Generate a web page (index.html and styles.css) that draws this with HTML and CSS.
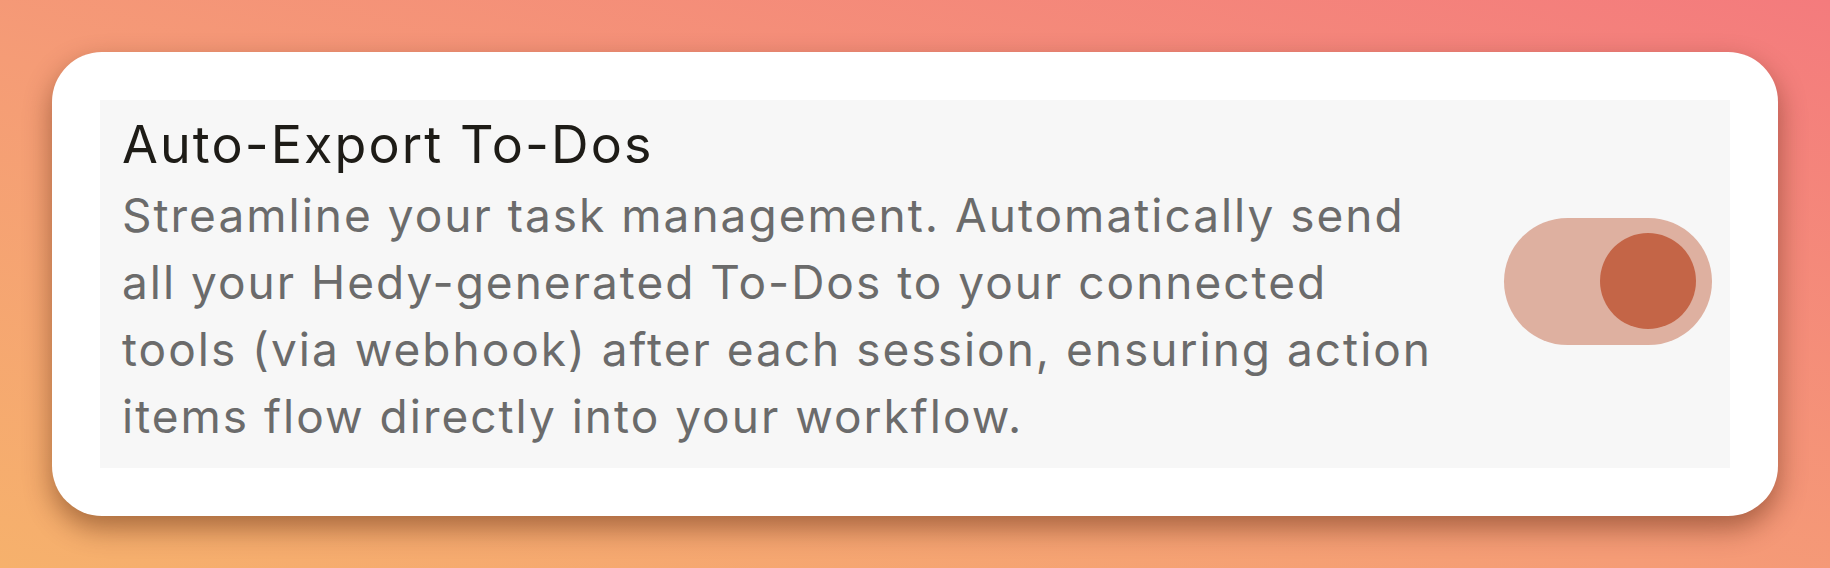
FILE: index.html
```html
<!DOCTYPE html>
<html lang="en">
<head>
    <meta charset="UTF-8">
    <meta name="viewport" content="width=device-width, initial-scale=1.0">
    <title>Auto-Export To-Dos</title>
    <link rel="stylesheet" href="styles.css">
</head>
<body>
    <main class="stage">
        <section class="card">
            <div class="setting">
                <div class="setting-text">
                    <h2 class="setting-title">Auto-Export To-Dos</h2>
                    <p class="setting-desc">Streamline your task management. Automatically send all your Hedy-generated To-Dos to your connected tools (via webhook) after each session, ensuring action items flow directly into your workflow.</p>
                </div>
                <button class="toggle is-on" type="button" aria-pressed="true" aria-label="Auto-Export To-Dos">
                    <span class="toggle-knob"></span>
                </button>
            </div>
        </section>
    </main>
</body>
</html>
```

FILE: styles.css
```css
html, body {
    margin: 0;
    height: 100%;
}
body {
    font-family: Inter, "Noto Sans", sans-serif;
    background: linear-gradient(to top right, #f6b16c 0%, #f59c76 45%, #f47b7d 100%);
}
.stage {
    box-sizing: border-box;
    height: 100%;
    padding: 52px;
}
.card {
    box-sizing: border-box;
    height: 464px;
    padding: 48px;
    background-color: #fff;
    border-radius: 50px;
    box-shadow: 0 12px 28px rgba(70, 25, 0, 0.45);
}
.setting {
    box-sizing: border-box;
    display: flex;
    align-items: center;
    justify-content: space-between;
    height: 100%;
    padding: 12px 18px 0 22px;
    background-color: #f7f7f7;
}
.setting-text {
    align-self: flex-start;
    max-width: 1335px;
}
.setting-title {
    margin: 0;
    font-size: 52px;
    font-weight: 400;
    line-height: 66px;
    letter-spacing: 2.1px;
    color: #1e1c17;
}
.setting-desc {
    margin: 4px 0 0;
    font-size: 46px;
    line-height: 67px;
    letter-spacing: 2px;
    color: #6b6b6b;
}
.toggle {
    display: flex;
    align-items: center;
    justify-content: flex-end;
    box-sizing: border-box;
    width: 208px;
    height: 127px;
    padding: 0 16px;
    margin-bottom: 18px;
    border: none;
    border-radius: 64px;
    background-color: #deb0a0;
    cursor: pointer;
}
.toggle-knob {
    width: 96px;
    height: 96px;
    border-radius: 50%;
    background-color: #c46547;
}
```
